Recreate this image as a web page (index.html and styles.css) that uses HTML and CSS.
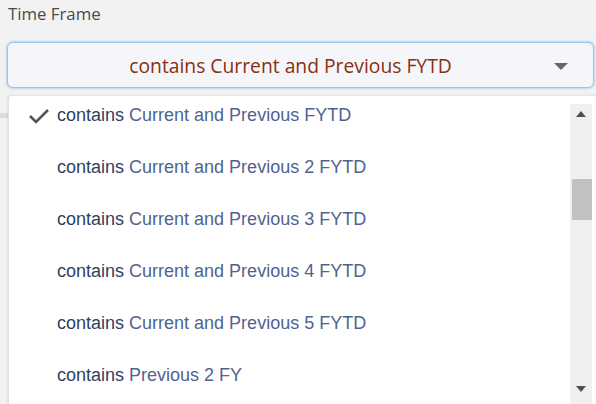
FILE: index.html
```html
<!DOCTYPE html>
<html>
<head>
<meta charset="utf-8">
<link rel="stylesheet" href="styles.css">
</head>
<body>
<div class="page">
  <div class="label">Time Frame</div>
  <div class="select">
    <span class="select-text">contains Current and Previous FYTD</span>
    <span class="caret"></span>
  </div>
  <div class="under-strip"></div>
  <div class="menu">
    <ul class="list">
      <li class="item selected"><svg class="check" viewBox="0 0 22 16" width="22" height="16"><path d="M2 8 L8 14 L20 2" fill="none" stroke="#555" stroke-width="2.6"/></svg><span class="kw">contains</span> <span class="val">Current and Previous FYTD</span></li>
      <li class="item"><span class="kw">contains</span> <span class="val">Current and Previous 2 FYTD</span></li>
      <li class="item"><span class="kw">contains</span> <span class="val">Current and Previous 3 FYTD</span></li>
      <li class="item"><span class="kw">contains</span> <span class="val">Current and Previous 4 FYTD</span></li>
      <li class="item"><span class="kw">contains</span> <span class="val">Current and Previous 5 FYTD</span></li>
      <li class="item"><span class="kw">contains</span> <span class="val">Previous 2 FY</span></li>
    </ul>
    <div class="scrollbar">
      <span class="sb-up"></span>
      <span class="sb-thumb"></span>
      <span class="sb-down"></span>
    </div>
  </div>
</div>
</body>
</html>
```
FILE: styles.css
```css
html, body {
  margin: 0;
  padding: 0;
  background: #f2f2f2;
  overflow: hidden;
}
.page {
  width: 596px;
  height: 404px;
  position: relative;
  overflow: hidden;
}
.label {
  font-family: "Open Sans", sans-serif;
  font-size: 16.8px;
  color: #4a4a4a;
  padding: 4px 0 0 8px;
  line-height: 20px;
}
.select {
  margin: 18px 2px 0 7px;
  height: 46px;
  box-sizing: border-box;
  border: 1px solid #9cc3e8;
  border-radius: 6px;
  background: #f4f6fa;
  box-shadow: 0 0 2px 1px rgba(150, 195, 235, 0.6);
  display: flex;
  align-items: center;
  justify-content: center;
  position: relative;
}
.select-text {
  font-family: "Open Sans", sans-serif;
  font-size: 19.3px;
  color: #8a2f12;
  margin-left: -20px;
}
.caret {
  position: absolute;
  right: 25px;
  top: 20px;
  width: 0;
  height: 0;
  border-left: 7px solid transparent;
  border-right: 7px solid transparent;
  border-top: 7px solid #666;
}
.under-strip {
  position: absolute;
  left: 0;
  top: 113px;
  width: 10px;
  height: 5px;
  background: #dcdcdc;
}
.menu {
  position: absolute;
  left: 8px;
  top: 95px;
  width: 600px;
  height: 320px;
  background: #fff;
  border-left: 1px solid #e0e0e0;
  border-top: 1px solid #e6e6e6;
  border-radius: 4px 0 0 0;
  box-shadow: -1px 0 2px rgba(0,0,0,0.08);
  display: flex;
}
.list {
  list-style: none;
  margin: 0;
  padding: 0;
  flex: 1;
}
.item {
  height: 52px;
  line-height: 20px;
  padding: 9px 0 0 48px;
  box-sizing: border-box;
  font-family: "Liberation Sans", Arial, sans-serif;
  font-size: 18px;
  position: relative;
}
.kw { color: #2e3f5e; }
.val { color: #4f6390; }
.check {
  position: absolute;
  left: 19px;
  top: 12px;
}
.scrollbar {
  width: 22px;
  margin-right: 17px;
  margin-top: 8px;
  background: #f0f0f0;
  position: relative;
}
.sb-up, .sb-down {
  position: absolute;
  left: 6px;
  width: 0;
  height: 0;
  border-left: 5px solid transparent;
  border-right: 5px solid transparent;
}
.sb-up {
  top: 7px;
  border-bottom: 6px solid #505050;
}
.sb-down {
  top: 282px;
  border-top: 6px solid #505050;
}
.sb-thumb {
  position: absolute;
  left: 2px;
  right: 0;
  top: 75px;
  height: 41px;
  background: #c1c1c1;
}
```
